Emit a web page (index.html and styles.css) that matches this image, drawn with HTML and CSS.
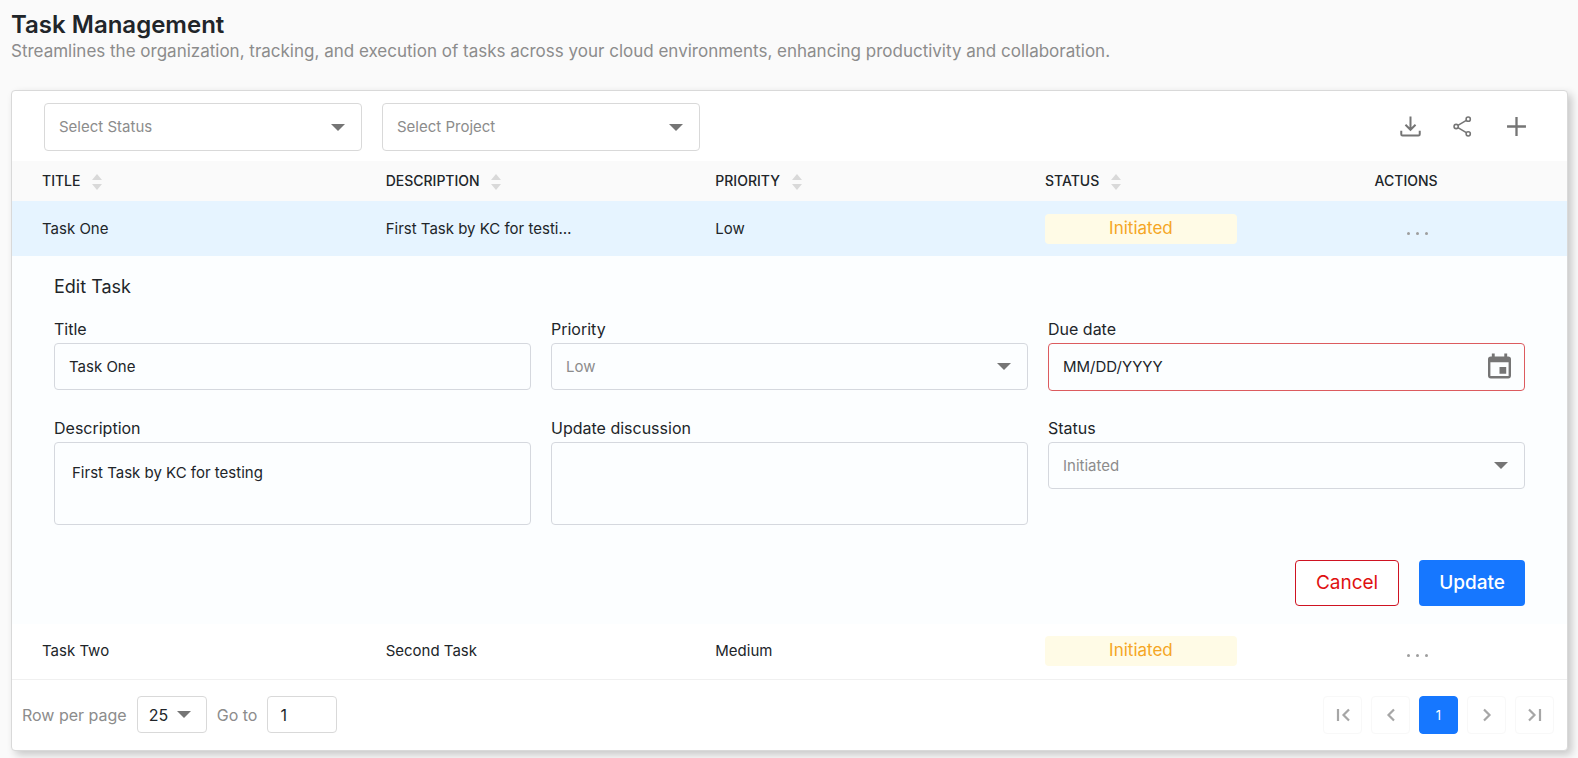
FILE: index.html
```html
<!DOCTYPE html>
<html lang="en">
<head>
<meta charset="utf-8">
<title>Task Management</title>
<link rel="stylesheet" href="styles.css">
</head>
<body>
<svg class="defs" aria-hidden="true">
  <symbol id="caret" viewBox="0 0 14 7"><path d="M0 0h14L7 7z" fill="currentColor"/></symbol>
  <symbol id="sort" viewBox="0 0 10 16"><path d="M0 6h10L5 0zM0 10h10l-5 6z" fill="currentColor"/></symbol>
</svg>

<header class="page-header">
  <h1>Task Management</h1>
  <p>Streamlines the organization, tracking, and execution of tasks across your cloud environments, enhancing productivity and collaboration.</p>
</header>

<main class="card">
  <div class="toolbar">
    <div class="select filter">
      <select aria-label="Status filter"><option>Select Status</option></select>
      <svg class="caret"><use href="#caret"/></svg>
    </div>
    <div class="select filter">
      <select aria-label="Project filter"><option>Select Project</option></select>
      <svg class="caret"><use href="#caret"/></svg>
    </div>
    <div class="tools">
      <button type="button" aria-label="Download">
        <svg class="icon" viewBox="0 0 20 20"><path d="M10 0.5v12.500M5.200 8.300L10 13.100l4.800-4.800M1.200 14v3.300q0 1.200 1.200 1.200h15.200q1.200 0 1.200-1.200V14" stroke-width="1.900"/></svg>
      </button>
      <button type="button" aria-label="Share">
        <svg class="icon" viewBox="0 0 20 20"><circle cx="3" cy="10" r="2" stroke-width="1.500"/><circle cx="14.500" cy="3" r="2" stroke-width="1.500"/><circle cx="14.500" cy="17" r="2" stroke-width="1.500"/><path d="M4.700 8.900l8-4.800M4.700 11.100l8 4.800" stroke-width="1.500"/></svg>
      </button>
      <button type="button" aria-label="Add">
        <svg class="icon" viewBox="0 0 20 20"><path d="M10 1v18M1 10h18" stroke-width="2.200"/></svg>
      </button>
    </div>
  </div>

  <table class="tasks">
    <colgroup><col class="col-title"><col class="col-data"><col class="col-data"><col class="col-data"><col></colgroup>
    <thead>
      <tr>
        <th>TITLE <svg class="sort"><use href="#sort"/></svg></th>
        <th>DESCRIPTION <svg class="sort"><use href="#sort"/></svg></th>
        <th>PRIORITY <svg class="sort"><use href="#sort"/></svg></th>
        <th>STATUS <svg class="sort"><use href="#sort"/></svg></th>
        <th>ACTIONS</th>
      </tr>
    </thead>
    <tbody>
      <tr class="row selected">
        <td>Task One</td>
        <td>First Task by KC for testi…</td>
        <td>Low</td>
        <td><div class="badge">Initiated</div></td>
        <td><button type="button" class="more" aria-label="Task One actions"><i></i><i></i><i></i></button></td>
      </tr>
      <tr>
        <td class="editor" colspan="5">
          <form>
            <h2>Edit Task</h2>
            <div class="fields">
              <div class="field">
                <label for="title">Title</label>
                <input class="control" id="title" type="text" value="Task One">
              </div>
              <div class="field">
                <label for="priority">Priority</label>
                <div class="select">
                  <select id="priority"><option>Low</option></select>
                  <svg class="caret"><use href="#caret"/></svg>
                </div>
              </div>
              <div class="field">
                <label for="due">Due date</label>
                <div class="date">
                  <input id="due" type="text" placeholder="MM/DD/YYYY">
                  <button type="button" aria-label="Choose date">
                    <svg viewBox="0 0 24 26"><path fill-rule="evenodd" d="M4 0h3v3h10V0h3v3h1a3 3 0 0 1 3 3v17a3 3 0 0 1-3 3H3a3 3 0 0 1-3-3V6a3 3 0 0 1 3-3h1zM2.500 9v14.500h19V9zM12 14h7v7h-7z" fill="currentColor"/></svg>
                  </button>
                </div>
              </div>
              <div class="field">
                <label for="description">Description</label>
                <textarea class="control" id="description">First Task by KC for testing</textarea>
              </div>
              <div class="field">
                <label for="discussion">Update discussion</label>
                <textarea class="control" id="discussion"></textarea>
              </div>
              <div class="field">
                <label for="status">Status</label>
                <div class="select">
                  <select id="status"><option>Initiated</option></select>
                  <svg class="caret"><use href="#caret"/></svg>
                </div>
              </div>
            </div>
            <div class="form-actions">
              <button type="button" class="btn cancel">Cancel</button>
              <button type="button" class="btn update">Update</button>
            </div>
          </form>
        </td>
      </tr>
      <tr class="row last">
        <td>Task Two</td>
        <td>Second Task</td>
        <td>Medium</td>
        <td><div class="badge">Initiated</div></td>
        <td><button type="button" class="more" aria-label="Task Two actions"><i></i><i></i><i></i></button></td>
      </tr>
    </tbody>
  </table>

  <footer class="footer">
    <label for="rows">Row per page</label>
    <div class="select small">
      <select id="rows"><option>25</option></select>
      <svg class="caret"><use href="#caret"/></svg>
    </div>
    <label for="goto">Go to</label>
    <input class="goto" id="goto" type="text" value="1">
    <nav class="pager" aria-label="Pages">
      <button type="button" aria-label="First page"><svg class="icon" viewBox="0 0 16 16"><path d="M3 2v12M14 2.500L8.500 8l5.500 5.500" stroke-width="2.200"/></svg></button>
      <button type="button" aria-label="Previous page"><svg class="icon" viewBox="0 0 16 16"><path d="M11 2.500L5.500 8l5.500 5.500" stroke-width="2.200"/></svg></button>
      <button type="button" class="current">1</button>
      <button type="button" aria-label="Next page"><svg class="icon" viewBox="0 0 16 16"><path d="M5 2.500l5.500 5.500L5 13.500" stroke-width="2.200"/></svg></button>
      <button type="button" aria-label="Last page"><svg class="icon" viewBox="0 0 16 16"><path d="M2 2.500l5.500 5.500L2 13.500M13 2v12" stroke-width="2.200"/></svg></button>
    </nav>
  </footer>
</main>
</body>
</html>
```
FILE: styles.css
```css
* { box-sizing: border-box; }

body {
  margin: 0;
  padding: 11px 10px 7px 11px;
  background: #fafafa;
  color: #212529;
  font: 15px/24px Inter, "Open Sans", sans-serif;
}

button, input, select, textarea { font: inherit; color: inherit; margin: 0; }
button { padding: 0; border: 0; background: none; cursor: pointer; }

.defs { position: absolute; width: 0; height: 0; }
.icon { fill: none; stroke: currentColor; }

.page-header h1 { margin: 0; font-size: 24px; line-height: 28px; font-weight: 600; }
.page-header p { margin: 0; font-size: 17px; line-height: 24px; color: #8c8c8c; }

.card {
  margin-top: 27px;
  background: #fff;
  border: 1px solid #d9d9d9;
  border-radius: 4px;
  box-shadow: 4px 4px 8px rgba(0, 0, 0, 0.2);
}

.toolbar { display: flex; align-items: center; gap: 20px; padding: 12px 40px 10px 32px; }
.tools { display: flex; gap: 32px; margin-left: auto; padding-bottom: 2px; color: #757575; }
.tools .icon { display: block; width: 21px; height: 21px; }

.select { display: grid; align-items: center; }
.select > * { grid-area: 1 / 1; }
.select select {
  appearance: none;
  width: 100%;
  height: 47px;
  padding: 0 40px 0 14px;
  border: 1px solid #d9d9d9;
  border-radius: 4px;
  background: transparent;
  color: #8c8c8c;
}
.filter { flex: 0 1 318px; }
.filter select { height: 48px; }
.caret { justify-self: end; width: 14px; height: 7px; margin-right: 17px; color: #757575; pointer-events: none; }

.tasks { width: 100%; table-layout: fixed; border-collapse: collapse; }
.col-title { width: 22.1%; }
.col-data { width: 21.2%; }
.tasks th {
  height: 40px;
  padding: 0 0 0 30px;
  background: #fafafa;
  text-align: left;
  font-size: 14px;
  font-weight: 500;
}
.sort { width: 10px; height: 16px; margin-left: 8px; color: #d9d9d9; vertical-align: middle; }
.row td { height: 55px; padding: 0 0 0 30px; }
.selected td { background: #e6f4ff; }
.last td { border-bottom: 1px solid #f0f0f0; }
.badge {
  width: 192px;
  height: 30px;
  border-radius: 4px;
  background: #fffbe6;
  color: #f5a623;
  font-size: 17px;
  line-height: 28px;
  text-align: center;
}
.more { display: flex; gap: 6px; padding: 9px 32px 0; color: #9e9e9e; }
.more i { width: 3px; height: 3px; border-radius: 50%; background: currentColor; }

.tasks .editor { padding: 18px 42px; background: #fcfeff; }
.editor h2 { margin: 0 0 18px; font-size: 18px; line-height: 26px; font-weight: 400; }
.fields { display: grid; grid-template-columns: repeat(3, minmax(0, 1fr)); gap: 26px 20px; align-items: start; }
.field > label { display: block; font-size: 16px; line-height: 22px; margin-bottom: 3px; }
.control { display: block; width: 100%; height: 47px; padding: 0 14px; border: 1px solid #d5d8de; border-radius: 4px; background: transparent; }
.field select { border-color: #d5d8de; }
textarea.control { height: 83px; padding: 18px 17px; resize: none; }
.date { display: flex; align-items: center; height: 48px; padding: 0 13px 0 14px; border: 1px solid #dc5b5f; border-radius: 4px; }
.date input { flex: 1; min-width: 0; padding: 0; border: 0; background: none; }
.date input::placeholder { color: #212529; opacity: 1; }
.date svg { display: block; width: 23px; height: 26px; margin-bottom: 3px; color: #757575; }
.form-actions { display: flex; justify-content: flex-end; gap: 20px; margin-top: 35px; }
.btn { height: 46px; border-radius: 4px; padding: 0 20px; font-size: 19px; }
.cancel { border: 1px solid #cf1322; color: #e01010; background: #fff; }
.update { background: #1677ff; color: #fff; font-weight: 500; }

.footer { display: flex; align-items: center; gap: 10px; min-height: 70px; padding: 0 13px 0 10px; color: #8c8c8c; font-size: 16px; }
.small select, .goto { width: 70px; height: 37px; color: #212529; }
.small select { padding: 0 11px; }
.small .caret { margin-right: 16px; }
.goto { padding: 0 12px; border: 1px solid #d9d9d9; border-radius: 4px; background: #fff; }
.pager { display: flex; gap: 9px; margin-left: auto; }
.pager button { display: grid; place-items: center; width: 39px; height: 38px; border: 1px solid #f8f8f8; border-radius: 4px; color: #a6a6a6; }
.pager .icon { width: 16px; height: 16px; }
.pager .current { border-color: #1677ff; background: #1677ff; color: #fff; font-size: 13px; }
```
